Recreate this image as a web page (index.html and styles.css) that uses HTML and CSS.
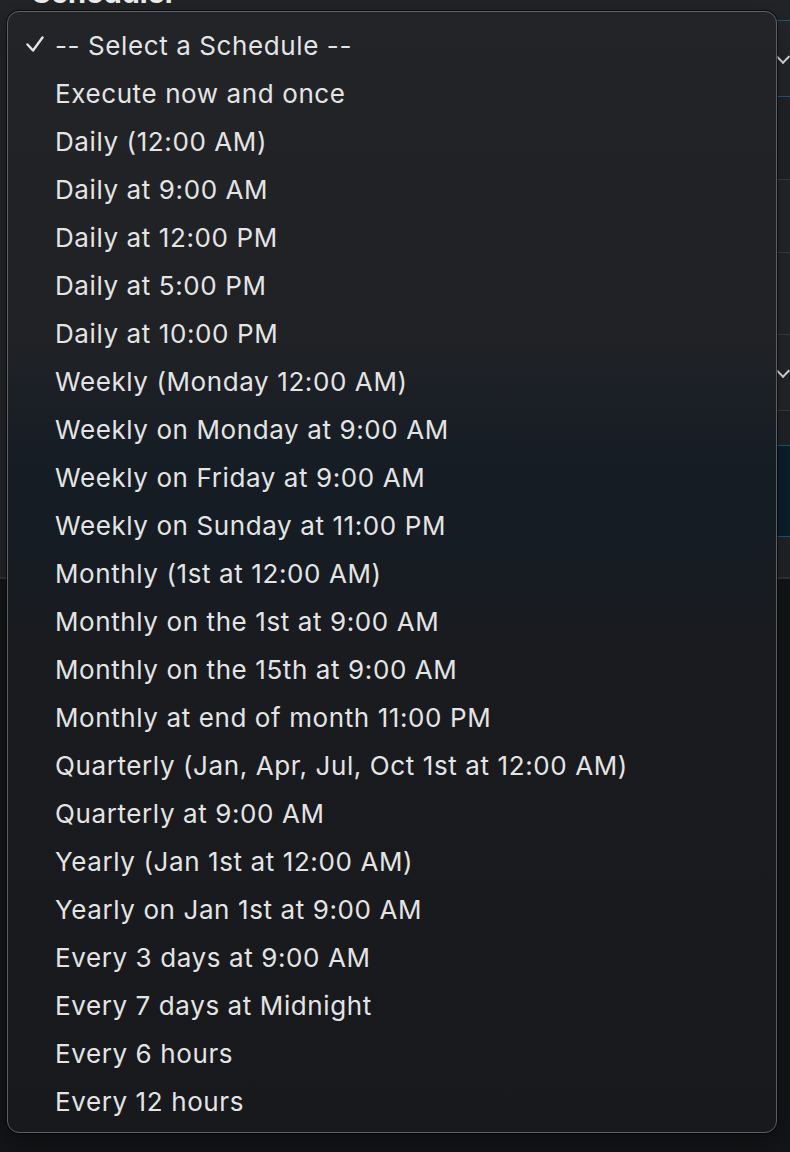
FILE: index.html
```html
<!DOCTYPE html>
<html>
<head>
<title>Scheduler - schedule picker</title>
<link rel="stylesheet" href="styles.css">
</head>
<body>

<div class='page'>
    <h1 class='title'>Scheduler</h1>
    <div class='form'>
        <div class='field select active'><span class='chev'></span></div>
        <div class='group'>
            <div class='field'></div>
            <div class='field'></div>
            <div class='field select'><span class='chev'></span></div>
        </div>
        <div class='field note'></div>
    </div>
    <div class='footer'></div>
</div>

<div class='menu'>
    <ul class='options'>
        <li class='option selected'>
            <span class='mark'>
                <svg width='18' height='18' viewBox='0 0 18 18'><polyline points='1.5,8.5 7,14.5 16.5,1.5' fill='none' stroke='#e4e4e4' stroke-width='2.4' stroke-linecap='round' stroke-linejoin='round'/></svg>
            </span>-- Select a Schedule --</li>
        <li class='option'><span class='mark'></span>Execute now and once</li>
        <li class='option'><span class='mark'></span>Daily (12:00 AM)</li>
        <li class='option'><span class='mark'></span>Daily at 9:00 AM</li>
        <li class='option'><span class='mark'></span>Daily at 12:00 PM</li>
        <li class='option'><span class='mark'></span>Daily at 5:00 PM</li>
        <li class='option'><span class='mark'></span>Daily at 10:00 PM</li>
        <li class='option'><span class='mark'></span>Weekly (Monday 12:00 AM)</li>
        <li class='option'><span class='mark'></span>Weekly on Monday at 9:00 AM</li>
        <li class='option'><span class='mark'></span>Weekly on Friday at 9:00 AM</li>
        <li class='option'><span class='mark'></span>Weekly on Sunday at 11:00 PM</li>
        <li class='option'><span class='mark'></span>Monthly (1st at 12:00 AM)</li>
        <li class='option'><span class='mark'></span>Monthly on the 1st at 9:00 AM</li>
        <li class='option'><span class='mark'></span>Monthly on the 15th at 9:00 AM</li>
        <li class='option'><span class='mark'></span>Monthly at end of month 11:00 PM</li>
        <li class='option'><span class='mark'></span>Quarterly (Jan, Apr, Jul, Oct 1st at 12:00 AM)</li>
        <li class='option'><span class='mark'></span>Quarterly at 9:00 AM</li>
        <li class='option'><span class='mark'></span>Yearly (Jan 1st at 12:00 AM)</li>
        <li class='option'><span class='mark'></span>Yearly on Jan 1st at 9:00 AM</li>
        <li class='option'><span class='mark'></span>Every 3 days at 9:00 AM</li>
        <li class='option'><span class='mark'></span>Every 7 days at Midnight</li>
        <li class='option'><span class='mark'></span>Every 6 hours</li>
        <li class='option'><span class='mark'></span>Every 12 hours</li>
    </ul>
</div>

</body>
</html>
```

FILE: styles.css
```css
/* dark macOS style popup menu over the scheduler form */

html {
    height: 100%;
}

body {
    height: 100%;
    margin: 0px;
    background: #222428;
    font-family: Inter, "Noto Sans", sans-serif;
    overflow: hidden;
}

/* ---- the page behind the menu (scrolled, title half hidden) ---- */

.page {
    display: flex;
    flex-flow: column;
    height: 100%;
}

.title {
    margin: -25px 0px 0px 32px;
    height: 37px;
    font-size: 29px;
    line-height: 36px;
    font-weight: 700;
    color: #f2f2f2;
}

.form {
    display: flex;
    flex-flow: column;
    padding: 8px 0px 0px 40px;
}

.field {
    box-sizing: border-box;
    position: relative;
    height: 74px;
    border: 1px solid #3a3c41;
    border-right: none;
    background: #25272b;
}

.field.active {
    height: 77px;
    border-color: #1e5c84;
}

.group {
    display: flex;
    flex-flow: column;
    margin-top: 82px;
}

.group > .field + .field {
    border-top: none;
}

.group > .field:nth-child(2) {
    height: 82px;
}

.group > .field:nth-child(3) {
    height: 76px;
}

.field.note {
    margin-top: 34px;
    height: 92px;
    border-color: #1b5a80;
    background: #0b212e;
}

.chev {
    position: absolute;
    right: 2px;
    top: 50%;
    width: 8px;
    height: 8px;
    margin-top: -7px;
    border-right: 2px solid #e8e8e8;
    border-bottom: 2px solid #e8e8e8;
    transform: rotate(45deg);
}

.footer {
    flex: 1;
    margin-top: 40px;
    border-top: 2px solid #323438;
    background: #141518;
}

/* ---- popup menu ---- */

.menu {
    position: absolute;
    left: 7px;
    top: 11px;
    width: 770px;
    height: 1122px;
    box-sizing: border-box;
    border: 1px solid #5d5f64;
    border-radius: 12px;
    box-shadow: 0px 0px 0px 1px rgba(0, 0, 0, 0.55), 0px 10px 30px rgba(0, 0, 0, 0.4);
    background: linear-gradient(to bottom,
        #222428 0px,
        #1f2125 340px,
        #1a1f26 400px,
        #151c24 470px,
        #161c23 540px,
        #1a1b1f 640px,
        #18191d 1122px);
    overflow: hidden;
}

.options {
    list-style: none;
    margin: 0px;
    padding: 9px 0px 7px 0px;
}

.option {
    display: flex;
    align-items: center;
    height: 48px;
    font-size: 26px;
    letter-spacing: 0.6px;
    color: #e4e4e4;
    white-space: nowrap;
}

.mark {
    flex: 0 0 47px;
    display: flex;
    align-items: center;
    padding-left: 18px;
    box-sizing: border-box;
}
```
